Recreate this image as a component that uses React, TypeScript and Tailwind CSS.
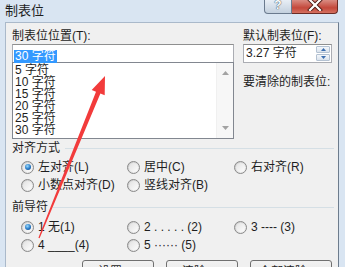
import React from "react";

function Radio({ checked = false }: { checked?: boolean }) {
  return (
    <span className="relative w-[13px] h-[13px] shrink-0 rounded-full border border-[#8a8a8a] bg-[linear-gradient(135deg,#c8c8c8,#f7f7f7)] flex items-center justify-center">
      <span className="w-[9px] h-[9px] rounded-full bg-[linear-gradient(135deg,#e2e2e2,#fdfdfd)] flex items-center justify-center">
        {checked && (
          <span className="w-[6px] h-[6px] rounded-full bg-[radial-gradient(circle_at_40%_35%,#9bdcff,#2477c4_55%,#0d3f7a)]" />
        )}
      </span>
    </span>
  );
}

function Option({ label, checked }: { label: string; checked?: boolean }) {
  return (
    <div className="h-[18px] flex items-center gap-[4px] whitespace-nowrap">
      <Radio checked={checked} />
      <span className="leading-[14px]">{label}</span>
    </div>
  );
}

function GroupHeader({ title }: { title: string }) {
  return (
    <div className="h-[14px] flex items-center pr-[4px]">
      <span className="leading-[14px]">{title}</span>
      <div className="flex-1 h-px bg-[#d5dfe5] ml-[5px]" />
    </div>
  );
}

function Btn({ label, w }: { label: string; w: string }) {
  return (
    <div
      className={`${w} h-[23px] shrink-0 rounded-[3px] border border-[#707070] bg-[linear-gradient(#f2f2f2,#ebebeb_50%,#dddddd_50%,#cfcfcf)] flex items-center justify-center leading-[14px]`}
    >
      {label}
    </div>
  );
}

const tabs = ["5 字符", "10 字符", "15 字符", "20 字符", "25 字符", "30 字符"];

export default function App() {
  return (
    <div className="relative w-[345px] h-[267px] overflow-hidden bg-[#d9e5f2] text-[12px] text-[#1e1e1e] font-['Liberation_Sans','Noto_Sans_CJK_SC',sans-serif]">
      {/* title bar */}
      <div className="h-[22px] flex items-start">
        <span className="pl-[5px] pt-[3px] text-[13px] leading-[16px] text-[#1e1e1e]">制表位</span>
        <div className="ml-auto mr-[7px] flex">
          <div className="w-[28px] h-[14px] rounded-bl-[4px] border border-t-0 border-[#6a7a8e] bg-[linear-gradient(#e8eef5,#c3d0de)] flex items-center justify-center">
            <span className="text-[12px] leading-[12px] font-bold text-white [text-shadow:0_0_1px_#33475c,0_0_1px_#33475c] -mt-[3px]">?</span>
          </div>
          <div className="w-[46px] h-[14px] rounded-br-[4px] border border-t-0 border-l-0 border-[#6b2b24] bg-[linear-gradient(#d98c82,#c4483b_60%,#d4705f)] flex items-center justify-center">
            <svg width="16" height="12" viewBox="0 0 16 12" className="-mt-[3px]">
              <path d="M3 1 L13 11 M13 1 L3 11" stroke="#4a1a14" strokeWidth="4" strokeLinecap="square" />
              <path d="M3 1 L13 11 M13 1 L3 11" stroke="#ffffff" strokeWidth="2.2" strokeLinecap="square" />
            </svg>
          </div>
        </div>
      </div>

      {/* dialog body */}
      <div className="ml-[5px] w-[334px] h-[260px] border-l border-t border-r border-l-[#aab9ca] border-t-[#aab9ca] border-r-[#6d7c8d] bg-[#f0f0f0] pl-[6px] pt-[6px]">
        <div className="flex">
          <div className="w-[222px]">
            <div className="h-[14px] leading-[14px]">制表位位置(T):</div>
            <div className="mt-[1px] h-[18px] border border-b-0 border-[#abadb3] border-t-[#8e8f8f] bg-white pt-[2px] pl-[1px]">
              <span className="inline-block h-[13px] leading-[13px] px-[1px] bg-[#3399ff] text-white">30 字符</span>
            </div>
            <div className="h-[77px] border border-[#828790] bg-white flex">
              <div className="flex-1 pt-[1px] pl-[2px]">
                {tabs.map((t) => (
                  <div key={t} className="h-[12px] leading-[12px] whitespace-nowrap">
                    {t}
                  </div>
                ))}
              </div>
              <div className="w-[17px] bg-[#f7f7f7] border-l border-[#f0f0f0] flex flex-col justify-between items-center py-[8px]">
                <svg width="7" height="4" viewBox="0 0 7 4">
                  <path d="M0 4 L3.5 0 L7 4 Z" fill="#a3a3a3" />
                </svg>
                <svg width="7" height="4" viewBox="0 0 7 4">
                  <path d="M0 0 L3.5 4 L7 0 Z" fill="#a3a3a3" />
                </svg>
              </div>
            </div>
          </div>

          <div className="ml-[9px] w-[89px]">
            <div className="h-[14px] leading-[14px] whitespace-nowrap">默认制表位(F):</div>
            <div className="mt-[1px] h-[19px] border border-[#abadb3] border-t-[#8e8f8f] bg-white flex">
              <span className="flex-1 pl-[2px] leading-[17px] whitespace-nowrap">3.27 字符</span>
              <div className="w-[14px] m-[1px] flex flex-col gap-[1px]">
                <div className="flex-1 rounded-[1px] border border-[#b4c2d2] bg-[linear-gradient(#f4f7fb,#d9e2ec)] flex items-center justify-center">
                  <svg width="5" height="3" viewBox="0 0 5 3">
                    <path d="M0 3 L2.5 0 L5 3 Z" fill="#3d6fb0" />
                  </svg>
                </div>
                <div className="flex-1 rounded-[1px] border border-[#b4c2d2] bg-[linear-gradient(#f4f7fb,#d9e2ec)] flex items-center justify-center">
                  <svg width="5" height="3" viewBox="0 0 5 3">
                    <path d="M0 0 L2.5 3 L5 0 Z" fill="#3d6fb0" />
                  </svg>
                </div>
              </div>
            </div>
            <div className="mt-[12px] h-[14px] leading-[14px] whitespace-nowrap">要清除的制表位:</div>
          </div>
        </div>

        <div className="mt-[2px]">
          <GroupHeader title="对齐方式" />
        </div>
        <div className="mt-[3px] pl-[9px] grid grid-cols-[106px_107px_auto]">
          <Option label="左对齐(L)" checked />
          <Option label="居中(C)" />
          <Option label="右对齐(R)" />
          <Option label="小数点对齐(D)" />
          <Option label="竖线对齐(B)" />
        </div>

        <div className="mt-[6px]">
          <GroupHeader title="前导符" />
        </div>
        <div className="mt-[4px] pl-[9px] grid grid-cols-[106px_107px_auto]">
          <Option label="1 无(1)" checked />
          <Option label="2 . . . . . (2)" />
          <Option label="3 ---- (3)" />
          <Option label="4 ____(4)" />
          <Option label="5 ······ (5)" />
        </div>

        <div className="mt-[6px] pl-[70px] flex gap-[12px]">
          <Btn label="设置(S)" w="w-[72px]" />
          <Btn label="清除(E)" w="w-[72px]" />
          <Btn label="全部清除(A)" w="w-[82px]" />
        </div>
      </div>

      {/* red annotation arrow */}
      <svg className="absolute inset-0 pointer-events-none" width="345" height="267" viewBox="0 0 345 267">
        <polygon
          points="105,76 104.7,95.3 100.4,93.6 39.6,238.2 38.4,237.8 96,91.8 91.7,90.1"
          fill="#f23b3b"
        />
      </svg>
    </div>
  );
}
